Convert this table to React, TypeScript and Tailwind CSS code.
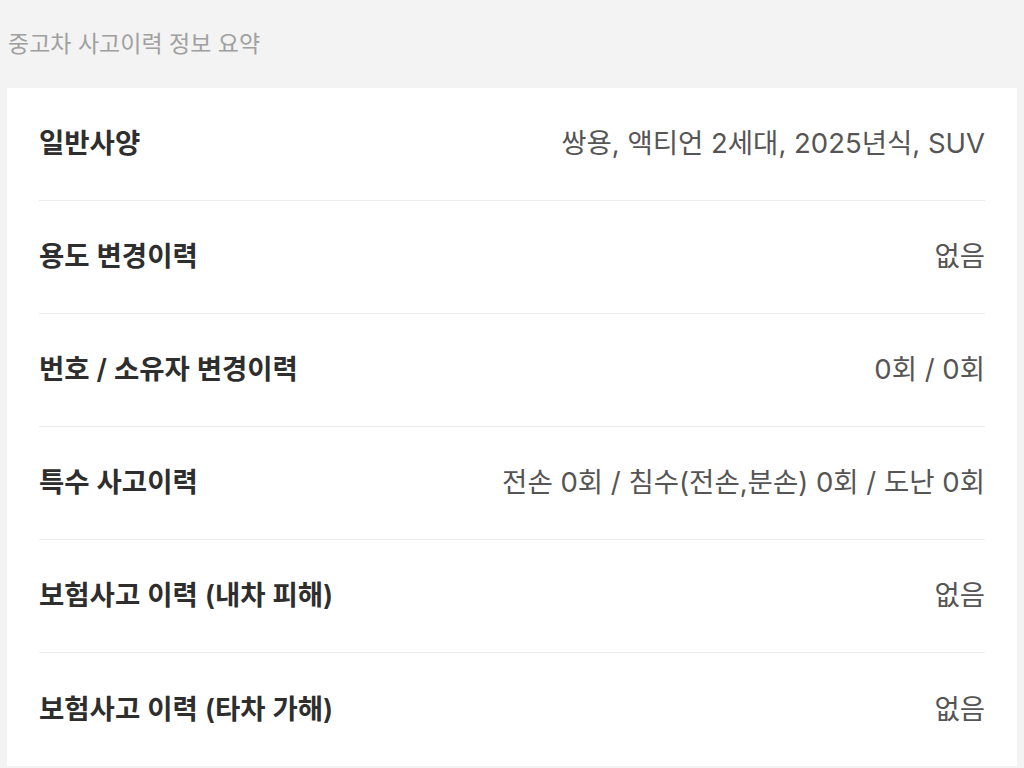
import React from 'react';

// Summary rows for the used-car accident history
const rows: { label: string; value: string }[] = [
  { label: '일반사양', value: '쌍용, 액티언 2세대, 2025년식, SUV' },
  { label: '용도 변경이력', value: '없음' },
  { label: '번호 / 소유자 변경이력', value: '0회 / 0회' },
  { label: '특수 사고이력', value: '전손 0회 / 침수(전손,분손) 0회 / 도난 0회' },
  { label: '보험사고 이력 (내차 피해)', value: '없음' },
  { label: '보험사고 이력 (타차 가해)', value: '없음' },
];

export default function App() {
  return (
    <div
      className="min-h-[768px] bg-[#f3f3f3]"
      style={{ fontFamily: 'Inter, "Noto Sans CJK KR", "Noto Sans", sans-serif' }}
    >
      {/* Title */}
      <div className="h-[88px] flex items-center px-[8px]">
        <h2 className="text-[23px] text-[#a0a0a0] leading-none">
          중고차 사고이력 정보 요약
        </h2>
      </div>

      {/* Card */}
      <div className="mx-[7px] bg-white px-[32px]">
        {rows.map((row, idx) => (
          <div
            key={idx}
            className={`flex items-center justify-between h-[113px] ${
              idx < rows.length - 1 ? 'border-b border-[#ececec]' : ''
            }`}
          >
            <span className="text-[27.5px] font-semibold text-[#2e2e2e]">
              {row.label}
            </span>
            <span className="text-[27.5px] text-[#555555]">
              {row.value}
            </span>
          </div>
        ))}
      </div>
    </div>
  );
}
